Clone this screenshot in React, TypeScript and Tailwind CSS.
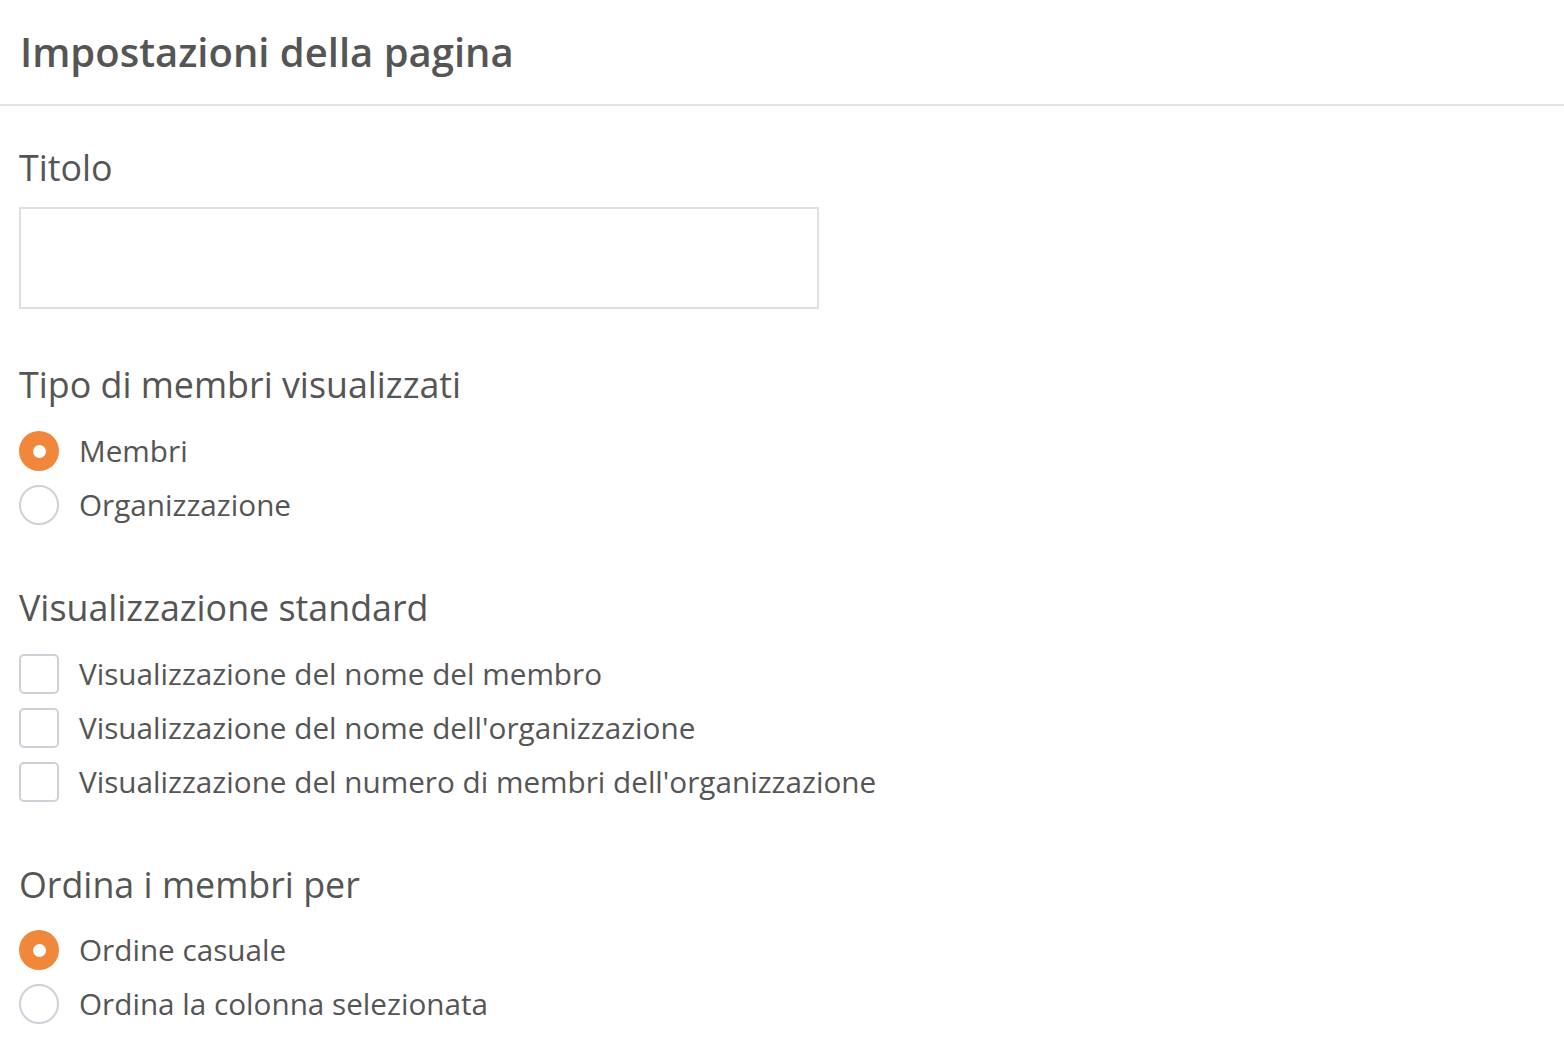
import React from 'react';

const Radio: React.FC<{ checked?: boolean; label: string }> = ({ checked, label }) => (
  <div className="flex items-center h-[54px]">
    {checked ? (
      <div className="w-10 h-10 rounded-full bg-[#f0873a] flex items-center justify-center shrink-0">
        <div className="w-[13px] h-[13px] rounded-full bg-white" />
      </div>
    ) : (
      <div className="w-10 h-10 rounded-full border-2 border-[#cdd1d8] bg-white shrink-0" />
    )}
    <span className="ml-5 text-[29.7px] leading-none text-[#555555]">{label}</span>
  </div>
);

const Checkbox: React.FC<{ label: string }> = ({ label }) => (
  <div className="flex items-center h-[54px]">
    <div className="w-10 h-10 rounded-[5px] border-2 border-[#cdd1d8] bg-white shrink-0" />
    <span className="ml-5 text-[29.7px] leading-none text-[#555555]">{label}</span>
  </div>
);

const SectionTitle: React.FC<{ children: React.ReactNode }> = ({ children }) => (
  <h2 className="text-[35.8px] h-[36px] text-[#555555] leading-none">{children}</h2>
);

export default function App() {
  return (
    <div className="min-h-screen w-full bg-white" style={{ fontFamily: '"Open Sans", "Noto Sans", sans-serif' }}>
      <header className="h-[106px] border-b-2 border-[#e4e4e4] px-5 flex items-center">
        <h1 className="text-[40px] font-semibold text-[#555555] leading-none">Impostazioni della pagina</h1>
      </header>

      <main className="px-[19px]">
        <section className="pt-[44px]">
          <SectionTitle>Titolo</SectionTitle>
          <input
            type="text"
            className="mt-[21px] block w-[800px] h-[102px] border-2 border-[#dde0e4] outline-none px-4 text-[29px]"
          />
        </section>

        <section className="pt-[58px]">
          <SectionTitle>Tipo di membri visualizzati</SectionTitle>
          <div className="mt-[21px]">
            <Radio checked label="Membri" />
            <Radio label="Organizzazione" />
          </div>
        </section>

        <section className="pt-[58px]">
          <SectionTitle>Visualizzazione standard</SectionTitle>
          <div className="mt-[21px]">
            <Checkbox label="Visualizzazione del nome del membro" />
            <Checkbox label="Visualizzazione del nome dell'organizzazione" />
            <Checkbox label="Visualizzazione del numero di membri dell'organizzazione" />
          </div>
        </section>

        <section className="pt-[58px]">
          <SectionTitle>Ordina i membri per</SectionTitle>
          <div className="mt-[20px]">
            <Radio checked label="Ordine casuale" />
            <Radio label="Ordina la colonna selezionata" />
          </div>
        </section>
      </main>
    </div>
  );
}
